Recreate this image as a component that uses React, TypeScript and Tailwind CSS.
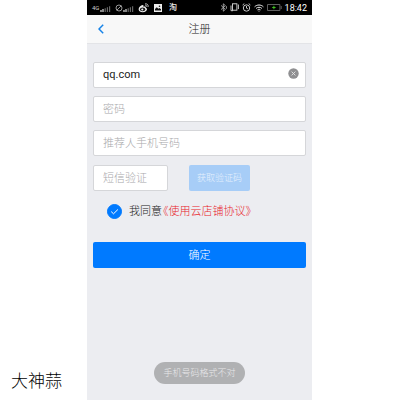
import { useState } from "react";

const field =
  "block h-[26px] w-full min-w-0 rounded-[2px] border border-[#d5d6d9] bg-white px-[9px] pt-px text-[11px] text-[#222] outline-none placeholder:text-[#a9a9ab]";

function Signal() {
  return (
    <svg width="11" height="8" viewBox="0 0 11 8" aria-hidden="true">
      <path d="M1 8V6M3 8V5" stroke="#ddd" strokeWidth="1.2" />
      <path d="M5.2 8V4.2M7.4 8V3.2M9.6 8V2.2" stroke="#666" strokeWidth="1.2" />
    </svg>
  );
}

function StatusBar() {
  return (
    <div className="flex h-[15px] items-center justify-between bg-black pr-[5px] pl-[5px] text-white">
      <div className="flex items-center">
        <span className="w-2 text-[6px] text-[#ccc]">4G</span>
        <Signal />
        <svg className="ml-1" width="8" height="8" viewBox="0 0 8 8" fill="none" stroke="#bbb" strokeWidth="0.8" aria-hidden="true">
          <circle cx="4" cy="4" r="3" />
          <path d="M6.2 1.8 1.8 6.2" />
        </svg>
        <Signal />
        <svg className="ml-1" width="11" height="10" viewBox="0 0 11 10" aria-hidden="true">
          <path d="M4.6 2.1C2.8 2.3.6 4.4.6 6.3c0 1.8 2 2.9 4.1 2.9 2.6 0 4.3-1.5 4.3-2.9 0-.9-.7-1.3-1.3-1.5.3-1-.4-1.6-2.2-.9.2-.9 0-1.9-.9-1.8Z" fill="#eee" />
          <ellipse cx="4.6" cy="6.4" rx="2.7" ry="1.8" fill="#111" />
          <circle cx="4.3" cy="6.5" r="1.1" fill="#eee" />
          <path d="M7 .9c2-.5 3.6 1 3.1 3M7.2 2.3c1-.2 1.8.6 1.5 1.5" fill="none" stroke="#eee" strokeWidth="0.8" />
        </svg>
        <svg className="ml-[5px]" width="8" height="8" viewBox="0 0 8 8" aria-hidden="true">
          <path d="M0 0h8v8H0Z" fill="#eee" />
          <path d="M1 6.5V5l1.8-1.7 1.6 1.4 1-.8L7 5.2v1.3Z" fill="#111" />
          <circle cx="5.5" cy="2.3" r="0.8" fill="#111" />
        </svg>
        <span className="ml-[7px] pt-px text-[8px] leading-none font-medium text-[#eee]">淘</span>
      </div>
      <div className="flex items-center">
        <svg width="7" height="9" viewBox="0 0 7 9" fill="none" stroke="#bbb" strokeWidth="0.8" aria-hidden="true">
          <path d="m1 2.4 4.4 4L3.3 8.2V.8l2.1 1.8L1 6.6M6.4 3.2v2.6" />
        </svg>
        <svg className="ml-[3px]" width="9" height="9" viewBox="0 0 9 9" fill="none" stroke="#ddd" strokeWidth="0.9" aria-hidden="true">
          <rect x="2.5" y="0.8" width="4.4" height="6.4" />
          <path d="M1 2.5v5.2h2M8.4 1.5v4.6" />
        </svg>
        <svg className="ml-[3px]" width="9" height="9" viewBox="0 0 9 9" fill="none" stroke="#ddd" strokeWidth="0.9" aria-hidden="true">
          <circle cx="4.5" cy="5" r="3.2" />
          <path d="M4.5 3v2.2l1.4.6M.6 2 2.3.6M8.4 2 6.7.6" />
        </svg>
        <svg className="ml-[3px]" width="10" height="8" viewBox="0 0 10 8" fill="none" stroke="#eee" strokeWidth="1" aria-hidden="true">
          <path d="M.6 2.8c2.5-2.4 6.3-2.4 8.8 0M2.1 4.4c1.7-1.5 4.1-1.5 5.8 0M3.5 5.9c.9-.8 2.1-.8 3 0" />
          <circle cx="5" cy="7" r="0.6" fill="#eee" stroke="none" />
        </svg>
        <svg className="ml-[3px]" width="15" height="7" viewBox="0 0 15 7" fill="none" aria-hidden="true">
          <path d="M.5.5h12.4v6H.5ZM14.2 2v3" stroke="#777" strokeWidth="0.8" />
          <path d="M5.2 3.5h3.4M6.9 1.8v3.4" stroke="#4c2" strokeWidth="0.9" />
        </svg>
        <span className="ml-[3px] pt-px text-[9px] leading-none">18:42</span>
      </div>
    </div>
  );
}

export default function App() {
  const [account, setAccount] = useState("qq.com");
  const [agreed, setAgreed] = useState(true);

  return (
    <div className="grid min-h-screen grid-cols-[87fr_225fr_88fr] bg-white font-['Roboto','Noto_Sans_CJK_SC',sans-serif]">
      <p className="self-end pb-[7px] pl-[11px] text-[17px] leading-6 font-light whitespace-nowrap text-black">大神蒜</p>
      <main className="flex min-w-0 flex-col bg-[#ecedf1]">
        <StatusBar />
        <header className="grid h-[29px] grid-cols-[1fr_auto_1fr] items-center border-b border-[#e3e4e7] bg-[#f8f8f8] px-[11px]">
          <button type="button" aria-label="返回" className="justify-self-start">
            <svg width="6" height="10" viewBox="0 0 6 10" fill="none" stroke="#1683e8" strokeWidth="1.5" aria-hidden="true">
              <path d="M5.2.8 1 5l4.2 4.2" />
            </svg>
          </button>
          <h1 className="pt-[2px] text-[11px] leading-4 font-light text-[#222]">注册</h1>
        </header>
        <form className="flex flex-col px-[6px] pt-[18px] font-light" onSubmit={(e) => e.preventDefault()}>
          <div className="flex flex-col gap-2">
            <div className="relative">
              <input
                aria-label="账号"
                className="block h-[26px] w-full min-w-0 rounded-[2px] border border-[#d5d6d9] bg-white px-[9px] pb-[2px] text-[11px] font-normal text-[#222] outline-none"
                value={account}
                onChange={(e) => setAccount(e.target.value)}
              />
              <button type="button" aria-label="清除" className="absolute top-[6px] right-[7px]" onClick={() => setAccount("")}>
                <svg width="11" height="11" viewBox="0 0 11 11" aria-hidden="true">
                  <circle cx="5.5" cy="5.5" r="5.2" fill="#8f8f91" />
                  <path d="m3.6 3.6 3.8 3.8m0-3.8L3.6 7.4" stroke="#e4e4e4" strokeWidth="0.9" />
                </svg>
              </button>
            </div>
            <input type="password" aria-label="密码" placeholder="密码" className={field} />
            <input type="tel" aria-label="推荐人手机号码" placeholder="推荐人手机号码" className={field} />
            <div className="grid grid-cols-[75fr_61fr_35fr] gap-x-[21px] pt-px">
              <input aria-label="短信验证" placeholder="短信验证" className={field} />
              <button type="button" className="h-[26px] rounded-[2px] bg-[#a7cdf7] pt-px text-[9px] whitespace-nowrap text-[#e6f1fd]">
                获取验证码
              </button>
            </div>
          </div>
          <div className="mt-[11px] flex items-center gap-px pl-[14px] text-[11px] leading-4 whitespace-nowrap">
            <label className="flex items-center gap-[7px] text-[#222]">
              <span className="grid size-[15px]">
                <input
                  type="checkbox"
                  checked={agreed}
                  onChange={(e) => setAgreed(e.target.checked)}
                  className="peer col-start-1 row-start-1 size-[15px] appearance-none rounded-full border border-[#007aff] bg-white checked:bg-[#007aff]"
                />
                <svg className="pointer-events-none invisible col-start-1 row-start-1 peer-checked:visible" width="15" height="15" viewBox="0 0 15 15" fill="none" stroke="#fff" aria-hidden="true">
                  <path d="m4.2 7.6 2.3 2.2 4.4-4.3" />
                </svg>
              </span>
              <span className="pt-[2px]">我同意</span>
            </label>
            <a href="#agreement" className="pt-[2px] text-[#e8232b] [font-feature-settings:'halt']">《使用云店铺协议》</a>
          </div>
          <button type="submit" className="mt-[22px] h-[26px] rounded-[2px] bg-[#007aff] pt-[2px] text-[11px] text-white">
            确定
          </button>
        </form>
        <div role="status" className="mx-auto mt-auto mb-4 rounded-full bg-[#b0b1b3] px-[9px] text-[9px] leading-[22px] font-light text-[#e8e8ea]">
          手机号码格式不对
        </div>
      </main>
    </div>
  );
}
